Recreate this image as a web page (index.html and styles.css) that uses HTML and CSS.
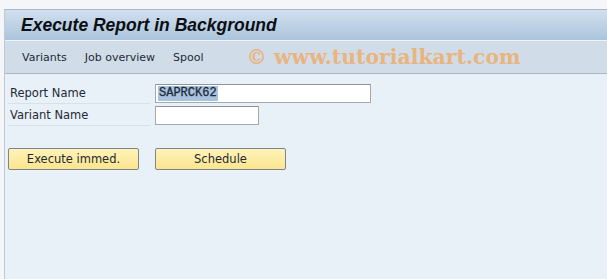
FILE: index.html
```html
<!DOCTYPE html>
<html>
<head>
<meta charset="utf-8">
<link rel="stylesheet" href="styles.css">
</head>
<body>
<div class="frame">
  <div class="titlebar"><h1 class="title">Execute Report in Background</h1></div>
  <div class="toolbar">
    <span class="tb-item">Variants</span>
    <span class="tb-item">Job overview</span>
    <span class="tb-item">Spool</span>
    <span class="watermark">© www.tutorialkart.com</span>
  </div>
  <div class="content">
    <div class="row">
      <label class="lbl">Report Name</label>
      <div class="field field-long"><span class="sel">SAPRCK62</span></div>
    </div>
    <div class="row">
      <label class="lbl">Variant Name</label>
      <div class="field field-short"></div>
    </div>
    <div class="buttons">
      <button class="btn">Execute immed.</button>
      <button class="btn">Schedule</button>
    </div>
  </div>
</div>
</body>
</html>
```
FILE: styles.css
```css
html, body { margin: 0; padding: 0; height: 100%; }
body {
  background: #f4f6f9;
  font-family: "DejaVu Sans", "Liberation Sans", sans-serif;
  font-size: 12px;
  color: #1c2633;
}
.frame {
  margin: 9px 0 0 4px;
  border-left: 1px solid #c2c8cf;
  border-top: 1px solid #a9b9c9;
  height: calc(100% - 10px);
  background: #e8f0f8;
  display: flex;
  flex-direction: column;
}
.titlebar {
  height: 30px;
  background: linear-gradient(#d1e0ee, #abc4dc);
  border-bottom: 1px solid #eef3f8;
  display: flex;
  align-items: center;
  padding-left: 16px;
}
.title {
  margin: 0;
  font-family: "Liberation Sans", Arial, sans-serif;
  font-style: italic;
  font-weight: bold;
  font-size: 17.5px;
  color: #0b0f14;
}
.toolbar {
  height: 32px;
  background: #d0dde9;
  border-bottom: 1px solid #a8b6c4;
  display: flex;
  align-items: center;
  padding-left: 17px;
}
.tb-item {
  font-family: "DejaVu Sans", sans-serif;
  font-size: 11px;
  color: #1f2a36;
  margin-right: 18px;
}
.watermark {
  font-family: "DejaVu Serif", "Liberation Serif", serif;
  font-size: 20.4px;
  font-weight: bold;
  color: #e9b47f;
  margin-left: 25px;
}
.content {
  flex: 1;
  padding: 8px 0 0 3px;
}
.row {
  display: flex;
  align-items: center;
  height: 22px;
}
.lbl {
  width: 142px;
  padding-left: 2px;
  height: 21px;
  line-height: 21px;
  border-bottom: 1px solid #d8e0e8;
  font-family: "DejaVu Sans", sans-serif;
  font-size: 11.5px;
  color: #1f2a36;
  margin-right: 5px;
  box-sizing: border-box;
}
.field {
  height: 19px;
  box-sizing: border-box;
  background: #fff;
  border: 1px solid #a3a9b1;
  border-top-color: #8d949c;
  display: flex;
  align-items: center;
  padding-left: 2px;
}
.field-long { width: 216px; }
.field-short { width: 104px; }
.sel {
  background: #a9c3df;
  font-family: "Liberation Mono", monospace;
  font-size: 12px;
  color: #1d2a3c;
  padding: 0 1px;
  line-height: 15px;
  -webkit-text-stroke: 0.3px #1d2a3c;
}
.buttons {
  display: flex;
  gap: 16px;
  margin-top: 22px;
}
.btn {
  width: 131px;
  height: 22px;
  background: linear-gradient(#fff3b8, #fbe58e);
  border: 1px solid #7d8490;
  border-radius: 2px;
  font-family: "DejaVu Sans", sans-serif;
  font-size: 11.5px;
  color: #1f2a36;
  padding: 0;
}
```
